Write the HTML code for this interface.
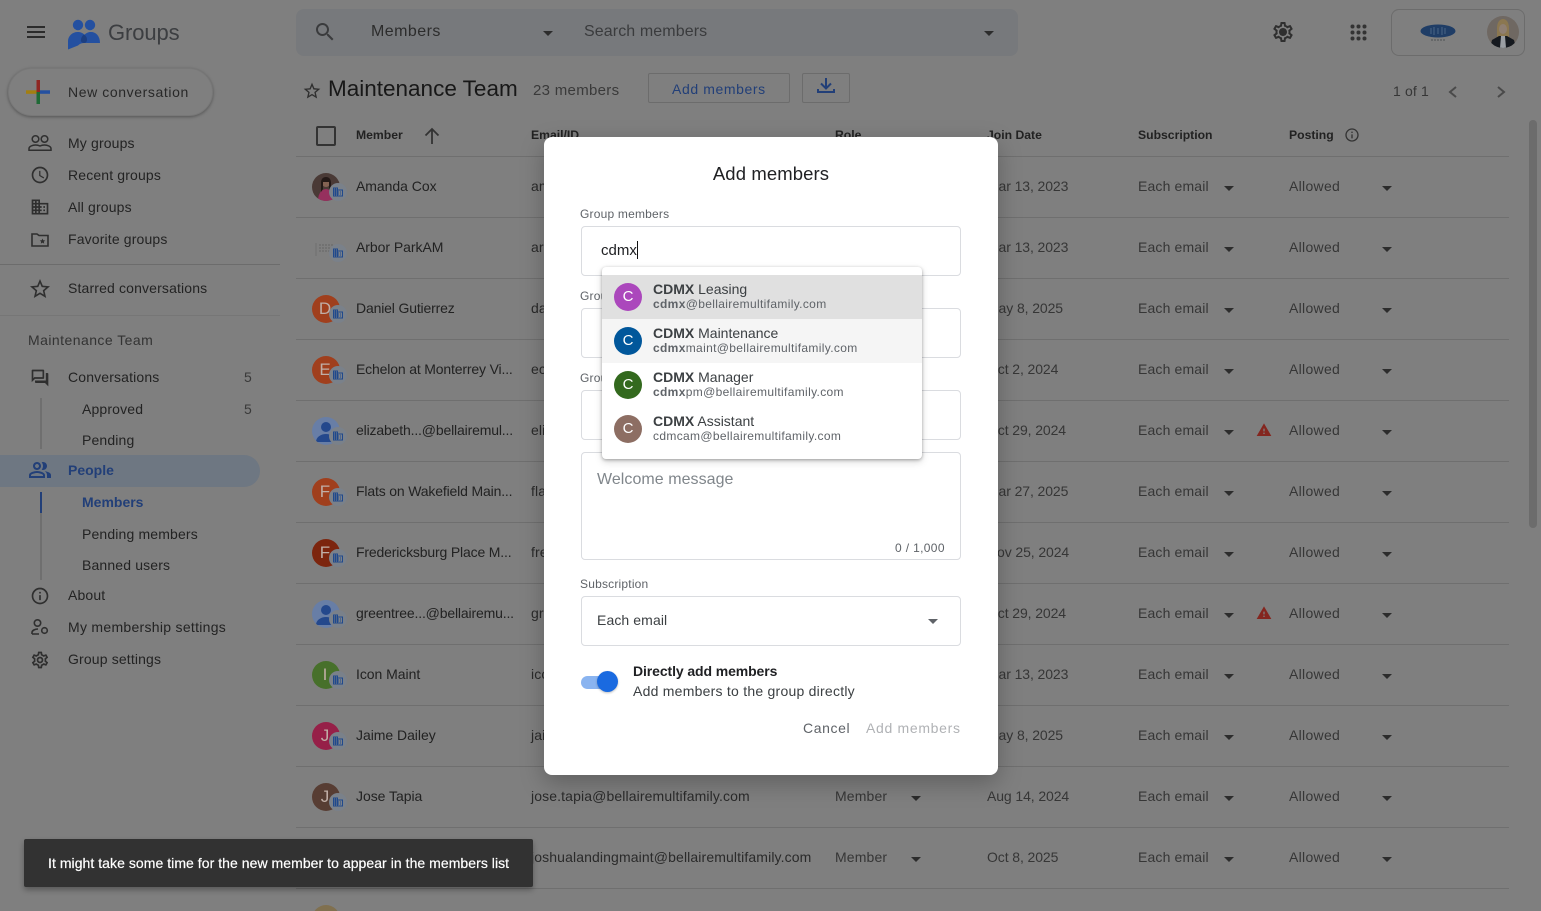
<!DOCTYPE html>
<html lang="en"><head><meta charset="utf-8"><title>Maintenance Team - Members</title>
<style>
*{box-sizing:border-box}
html,body{margin:0;padding:0;width:1541px;height:911px;overflow:hidden;background:#7f7f7f}
body{font-family:"Liberation Sans",Arial,sans-serif;font-size:14px;letter-spacing:.15px;color:#222;position:relative}
.t{position:absolute;white-space:nowrap;line-height:20px;height:20px}
.i{position:absolute;width:24px;height:24px;fill:#2f2f2f}
.s{width:20px;height:20px}
.b{position:absolute}
.r{position:absolute;left:0;width:1541px;height:61px}
.r:after{content:"";position:absolute;left:296px;width:1213px;top:60px;height:1px;background:#6f6f6f}
.r .t{top:19px;color:#2a2a2a}
.n{left:356px;color:#222!important;letter-spacing:-.04px}.l2{letter-spacing:-.16px}.e{left:531px;letter-spacing:.12px}.ro{left:835px;color:#363636!important}.d{left:987px;color:#363636!important;letter-spacing:-.1px}.su{left:1138px;color:#363636!important}.po{left:1289px;color:#363636!important;letter-spacing:.3px}
.c{position:absolute;width:0;height:0;border-left:5px solid transparent;border-right:5px solid transparent;border-top:5px solid #2c2c2c}
.r .c{top:29px}
.c1{left:911px}.c2{left:1224px}.c3{left:1382px}
.av{position:absolute;left:312px;top:16px;width:28px;height:28px;border-radius:50%;color:#c0aea6;font-size:17px;line-height:28px;text-align:center;padding-right:2px;overflow:hidden;letter-spacing:0}
.bd{position:absolute;left:329px;top:26px;width:18px;height:18px;border-radius:50%;background:#7a818a}
.bd svg{position:absolute;left:3px;top:3px;width:12px;height:12px;fill:#20498c}
.w{position:absolute;left:1256px;top:21px;width:16px;height:16px;fill:#84261f}
.h{font-weight:700;font-size:12.2px;color:#222;top:125px;letter-spacing:0}
.side{color:#232323}
.dlg{position:absolute;left:544px;top:137px;width:454px;height:638px;background:#fff;border-radius:8px;box-shadow:0 8px 24px rgba(0,0,0,.25)}
.f{position:absolute;left:37px;width:380px;border:1px solid #dadce0;border-radius:4px;background:#fff}
.l{position:absolute;left:36px;font-size:12px;color:#5f6368;line-height:16px;white-space:nowrap;letter-spacing:.2px}
.pop{position:absolute;left:58px;top:130px;width:320px;height:192px;background:#fff;border-radius:4px;box-shadow:0 1px 3px rgba(0,0,0,.3),0 3px 8px rgba(0,0,0,.15)}
.it{position:absolute;left:0;width:320px;height:44px}
.ca{position:absolute;left:12px;top:8px;width:28px;height:28px;border-radius:50%;color:#fff;text-align:center;line-height:28px;font-size:15px;letter-spacing:0}
.a1{position:absolute;left:51px;top:5px;font-size:14px;line-height:18px;color:#3c4043;white-space:nowrap;letter-spacing:0}
.a2{position:absolute;left:51px;top:21px;font-size:12px;line-height:16px;color:#5f6368;white-space:nowrap;letter-spacing:.34px}
.toast{position:absolute;left:24px;top:839px;width:509px;height:48px;background:#323232;border-radius:2px;color:#fff;line-height:48px;padding-left:24px;box-shadow:0 3px 6px rgba(0,0,0,.3);white-space:nowrap;font-size:14px;letter-spacing:.05px;-webkit-text-stroke:.2px #fff}
</style></head><body>
<svg width="0" height="0" style="position:absolute"><defs>
<symbol id="menu" viewBox="0 0 24 24"><path d="M3 18h18v-2H3v2zm0-5h18v-2H3v2zm0-7v2h18V6H3z"/></symbol>
<symbol id="search" viewBox="0 0 24 24"><path d="M15.5 14h-.79l-.28-.27C15.41 12.59 16 11.11 16 9.5 16 5.91 13.09 3 9.5 3S3 5.91 3 9.5 5.91 16 9.5 16c1.61 0 3.09-.59 4.23-1.57l.27.28v.79l5 4.99L20.49 19l-4.99-5zm-6 0C7.01 14 5 11.99 5 9.5S7.01 5 9.5 5 14 7.01 14 9.5 11.99 14 9.5 14z"/></symbol>
<symbol id="star" viewBox="0 0 24 24"><path d="M22 9.24l-7.19-.62L12 2 9.19 8.63 2 9.24l5.46 4.73L5.82 21 12 17.27 18.18 21l-1.63-7.03L22 9.24zM12 15.4l-3.76 2.27 1-4.28-3.32-2.88 4.38-.38L12 6.1l1.71 4.04 4.38.38-3.32 2.88 1 4.28L12 15.4z"/></symbol>
<symbol id="clock" viewBox="0 0 24 24"><path d="M11.99 2C6.47 2 2 6.48 2 12s4.47 10 9.99 10C17.52 22 22 17.52 22 12S17.52 2 11.99 2zM12 20c-4.42 0-8-3.58-8-8s3.58-8 8-8 8 3.58 8 8-3.58 8-8 8zm.5-13H11v6l5.25 3.15.75-1.23-4.5-2.67z"/></symbol>
<symbol id="domain" viewBox="0 0 24 24"><path d="M12 7V3H2v18h20V7H12zM6 19H4v-2h2v2zm0-4H4v-2h2v2zm0-4H4V9h2v2zm0-4H4V5h2v2zm4 12H8v-2h2v2zm0-4H8v-2h2v2zm0-4H8V9h2v2zm0-4H8V5h2v2zm10 12h-8v-2h2v-2h-2v-2h2v-2h-2V9h8v10zm-2-8h-2v2h2v-2zm0 4h-2v2h2v-2z"/></symbol>
<symbol id="forum" viewBox="0 0 24 24"><path d="M15 4v7H5.17L4 12.17V4h11m1-2H3c-.55 0-1 .45-1 1v14l4-4h10c.55 0 1-.45 1-1V3c0-.55-.45-1-1-1zm5 4h-2v9H6v2c0 .55.45 1 1 1h11l4 4V7c0-.55-.45-1-1-1z"/></symbol>
<symbol id="people" viewBox="0 0 24 24"><path d="M16.67 13.13C18.04 14.06 19 15.32 19 17v3h4v-3c0-2.18-3.57-3.47-6.33-3.87zM15 12c2.21 0 4-1.79 4-4s-1.79-4-4-4c-.47 0-.91.1-1.33.24C14.5 5.27 15 6.58 15 8s-.5 2.73-1.33 3.76c.42.14.86.24 1.33.24zM9 12c2.21 0 4-1.79 4-4s-1.79-4-4-4-4 1.79-4 4 1.79 4 4 4zm0-6c1.1 0 2 .9 2 2s-.9 2-2 2-2-.9-2-2 .9-2 2-2zM9 13c-2.67 0-8 1.34-8 4v3h16v-3c0-2.66-5.33-4-8-4zm6 5H3v-.99C3.2 16.29 6.3 15 9 15s5.8 1.29 6 2v1z"/></symbol>
<symbol id="info" viewBox="0 0 24 24"><path d="M11 7h2v2h-2zm0 4h2v6h-2zm1-9C6.48 2 2 6.48 2 12s4.48 10 10 10 10-4.48 10-10S17.52 2 12 2zm0 18c-4.41 0-8-3.59-8-8s3.59-8 8-8 8 3.59 8 8-3.59 8-8 8z"/></symbol>
<symbol id="gear" viewBox="0 0 24 24"><path d="M19.43 12.98c.04-.32.07-.64.07-.98 0-.34-.03-.66-.07-.98l2.11-1.65c.19-.15.24-.42.12-.64l-2-3.46c-.09-.16-.26-.25-.44-.25-.06 0-.12.01-.17.03l-2.49 1c-.52-.4-1.08-.73-1.69-.98l-.38-2.65C14.46 2.18 14.25 2 14 2h-4c-.25 0-.46.18-.49.42l-.38 2.65c-.61.25-1.17.59-1.69.98l-2.49-1c-.06-.02-.12-.03-.18-.03-.17 0-.34.09-.43.25l-2 3.46c-.13.22-.07.49.12.64l2.11 1.65c-.04.32-.07.65-.07.98 0 .33.03.66.07.98l-2.11 1.65c-.19.15-.24.42-.12.64l2 3.46c.09.16.26.25.44.25.06 0 .12-.01.17-.03l2.49-1c.52.4 1.08.73 1.69.98l.38 2.65c.03.24.24.42.49.42h4c.25 0 .46-.18.49-.42l.38-2.65c.61-.25 1.17-.59 1.69-.98l2.49 1c.06.02.12.03.18.03.17 0 .34-.09.43-.25l2-3.46c.12-.22.07-.49-.12-.64l-2.11-1.65zm-1.98-1.71c.04.31.05.52.05.73 0 .21-.02.43-.05.73l-.14 1.13.89.7 1.08.84-.7 1.21-1.27-.51-1.04-.42-.9.68c-.43.32-.84.56-1.25.73l-1.06.43-.16 1.13-.2 1.35h-1.4l-.19-1.35-.16-1.13-1.06-.43c-.43-.18-.83-.41-1.23-.71l-.91-.7-1.06.43-1.27.51-.7-1.21 1.08-.84.89-.7-.14-1.13c-.03-.31-.05-.54-.05-.74s.02-.43.05-.73l.14-1.13-.89-.7-1.08-.84.7-1.21 1.27.51 1.04.42.9-.68c.43-.32.84-.56 1.25-.73l1.06-.43.16-1.13.2-1.35h1.39l.19 1.35.16 1.13 1.06.43c.43.18.83.41 1.23.71l.91.7 1.06-.43 1.27-.51.7 1.21-1.07.85-.89.7.14 1.13zM12 8c-2.21 0-4 1.79-4 4s1.79 4 4 4 4-1.79 4-4-1.79-4-4-4zm0 6c-1.1 0-2-.9-2-2s.9-2 2-2 2 .9 2 2-.9 2-2 2z"/></symbol>
<symbol id="warn" viewBox="0 0 24 24"><path d="M1 21h22L12 2 1 21zm12-3h-2v-2h2v2zm0-4h-2v-4h2v4z"/></symbol>
<symbol id="bld" viewBox="0 0 24 24"><path d="M12 7V3H2v18h20V7H12zM6 19H4v-2h2v2zm0-4H4v-2h2v2zm0-4H4V9h2v2zm0-4H4V5h2v2zm4 12H8v-2h2v2zm0-4H8v-2h2v2zm0-4H8V9h2v2zm0-4H8V5h2v2zm10 12h-8v-2h2v-2h-2v-2h2v-2h-2V9h8v10zm-2-8h-2v2h2v-2zm0 4h-2v2h2v-2z"/></symbol>
</defs></svg>

<!-- top bar -->
<svg class="i" style="left:24px;top:20px;fill:#2b2b2b"><use href="#menu"/></svg>
<svg class="b" style="left:60px;top:12px" width="48" height="44" viewBox="60 12 48 44">
<circle cx="78" cy="25" r="5.200" fill="#2450a0"/><circle cx="90" cy="25" r="5.200" fill="#2450a0"/>
<path d="M68 49.500V41c0-5 4.500-9 9.500-9 3 0 5.500 1 7 2.800 1.500-1.800 4-2.800 6.500-2.800 5 0 9 4 9 11H84c-2 0-4 .5-6 2.500z" fill="#2450a0"/>
<path d="M84 34.500c2 1.200 3 3 3 5s-1 3.500-3 3.500-3.500-1.500-3-3.500c.2-2 1.300-3.800 3-5z" fill="#1d3f80"/></svg>
<div class="t" style="left:108px;top:20px;height:26px;line-height:26px;font-size:22px;color:#3c3e41;letter-spacing:-.1px">Groups</div>

<div class="b" style="left:296px;top:9px;width:722px;height:47px;background:#77797c;border-radius:8px"></div>
<svg class="i" style="left:313px;top:20px;fill:#3a3b3d"><use href="#search"/></svg>
<div class="t" style="left:371px;top:22px;font-size:16px;color:#2c2c2c;letter-spacing:.45px">Members</div>
<div class="c" style="left:543px;top:31px"></div>
<div class="t" style="left:584px;top:22px;font-size:16px;color:#3a3b3d;letter-spacing:.1px">Search members</div>
<div class="c" style="left:984px;top:31px"></div>
<svg class="i" style="left:1271px;top:20px;fill:#2f2f2f"><use href="#gear"/><circle cx="12" cy="12" r="2.500"/></svg>
<svg class="b" style="left:1350px;top:24px" width="18" height="18"><g fill="#333"><circle cx="2.500" cy="2.500" r="2"/><circle cx="8.500" cy="2.500" r="2"/><circle cx="14.500" cy="2.500" r="2"/><circle cx="2.500" cy="8.500" r="2"/><circle cx="8.500" cy="8.500" r="2"/><circle cx="14.500" cy="8.500" r="2"/><circle cx="2.500" cy="14.500" r="2"/><circle cx="8.500" cy="14.500" r="2"/><circle cx="14.500" cy="14.500" r="2"/></g></svg>
<div class="b" style="left:1391px;top:9px;width:134px;height:47px;border:1px solid #6c6c6c;border-radius:8px"></div>
<svg class="b" style="left:1420px;top:22px" width="36" height="20"><ellipse cx="18" cy="9" rx="17.500" ry="6.500" fill="#1f3d66"/><path d="M11 6v6M14 5v8M18 6v6M22 5v8M25 6v6" stroke="#56708f" stroke-width=".8" fill="none"/><path d="M11 18h14" stroke="#585a5c" stroke-width="1.200" stroke-dasharray="2 1"/></svg>
<svg class="b" style="left:1487px;top:16px" width="32" height="32" viewBox="0 0 32 32"><clipPath id="pc"><circle cx="16" cy="16" r="16"/></clipPath><g clip-path="url(#pc)"><rect width="32" height="32" fill="#6f6862"/><path d="M10 26V12c0-6 3-9 6-9s6 3 6 9v14z" fill="#8b7750"/><ellipse cx="16" cy="13" rx="4" ry="5" fill="#8f7f72"/><path d="M3 32l2-8 7-4h8l7 4 2 8z" fill="#15191f"/><path d="M13 32l1-12h4l1 12z" fill="#9a9ea3"/></g></svg>

<!-- sidebar -->
<div class="b" style="left:8px;top:68px;width:205px;height:48px;border-radius:24px;background:#7f7f7f;border:1px solid #787878;box-shadow:0 1px 3px rgba(0,0,0,.35)"></div>
<svg class="b" style="left:26px;top:80px" width="24" height="24"><rect x="10.500" y="0" width="3.500" height="12" fill="#8f2723"/><rect x="14" y="10.300" width="11" height="3.500" fill="#2450a0"/><rect x="10.500" y="12" width="3.500" height="12" fill="#1f6a36"/><rect x="0" y="10.300" width="10.500" height="3.500" fill="#a37f10"/></svg>
<div class="t" style="left:68px;top:82px;color:#282828;letter-spacing:.6px">New conversation</div>

<svg class="b" style="left:28px;top:134px" width="24" height="18" fill="none" stroke="#2f2f2f" stroke-width="1.500"><circle cx="7.500" cy="5" r="3.300"/><circle cx="16.500" cy="5" r="3.300"/><path d="M1 16.200v-1.700c0-2 3.500-3.500 6.500-3.500 1.800 0 3.300.4 4.500 1 1.200-.6 2.800-1 4.500-1 3 0 6.500 1.500 6.500 3.500v1.700z"/></svg><div class="t side" style="left:68px;top:133px">My groups</div>
<svg class="i s" style="left:30px;top:165px"><use href="#clock"/></svg><div class="t side" style="left:68px;top:165px">Recent groups</div>
<svg class="i s" style="left:30px;top:197px"><use href="#domain"/></svg><div class="t side" style="left:68px;top:197px">All groups</div>
<svg class="b" style="left:31px;top:232px" width="18" height="15"><path d="M1 2h5l2 1.500h9v10.500H1z" fill="none" stroke="#2f2f2f" stroke-width="1.600"/><path d="M11.500 6.500l.8 1.800 1.900.2-1.400 1.200.4 1.900-1.700-1-1.700 1 .4-1.900-1.400-1.200 1.900-.2z" fill="#2f2f2f"/></svg><div class="t side" style="left:68px;top:229px">Favorite groups</div>
<div class="b" style="left:0;top:264px;width:280px;height:1px;background:#6c6c6c"></div>
<svg class="i" style="left:28px;top:277px"><use href="#star"/></svg><div class="t side" style="left:68px;top:278px">Starred conversations</div>
<div class="b" style="left:0;top:315px;width:280px;height:1px;background:#767676"></div>
<div class="t" style="left:28px;top:330px;color:#333;letter-spacing:.45px">Maintenance Team</div>
<svg class="i s" style="left:30px;top:368px"><use href="#forum"/></svg><div class="t side" style="left:68px;top:367px">Conversations</div><div class="t" style="left:244px;top:367px;color:#3a3a3a">5</div>
<div class="b" style="left:40px;top:398px;width:2px;height:51px;background:#6f6f6f"></div>
<div class="t side" style="left:82px;top:399px">Approved</div><div class="t" style="left:244px;top:399px;color:#3a3a3a">5</div>
<div class="t side" style="left:82px;top:430px">Pending</div>
<div class="b" style="left:0;top:455px;width:260px;height:32px;background:#6e7782;border-radius:0 16px 16px 0"></div>
<svg class="i" style="left:28px;top:458px;fill:#223f78"><use href="#people"/></svg><div class="t" style="left:68px;top:460px;color:#223f78;font-weight:700;letter-spacing:0">People</div>
<div class="b" style="left:40px;top:492px;width:2px;height:88px;background:#6f6f6f"></div>
<div class="b" style="left:40px;top:492px;width:2px;height:21px;background:#223f78"></div>
<div class="t" style="left:82px;top:492px;color:#223f78;font-weight:700;letter-spacing:0">Members</div>
<div class="t side" style="left:82px;top:524px">Pending members</div>
<div class="t side" style="left:82px;top:555px">Banned users</div>
<svg class="i s" style="left:30px;top:586px"><use href="#info"/></svg><div class="t side" style="left:68px;top:585px">About</div>
<svg class="b" style="left:30px;top:618px" width="20" height="18" fill="none" stroke="#2f2f2f" stroke-width="1.600"><circle cx="7.500" cy="5" r="3.200"/><path d="M2 16v-1.500c0-2 3-3.500 6-3.500M2 16h7"/><circle cx="14.500" cy="12.500" r="2.800"/></svg><div class="t side" style="left:68px;top:617px;letter-spacing:.29px">My membership settings</div>
<svg class="i s" style="left:30px;top:650px"><use href="#gear"/></svg><div class="t side" style="left:68px;top:649px">Group settings</div>

<!-- title row -->
<svg class="i s" style="left:302px;top:81px"><use href="#star"/></svg>
<div class="t" style="left:328px;top:74px;height:30px;line-height:30px;font-size:22.500px;color:#181818;letter-spacing:0">Maintenance Team</div>
<div class="t" style="left:533px;top:81px;font-size:15px;color:#3a3a3a;letter-spacing:.3px">23 members</div>
<div class="b" style="left:648px;top:73px;width:142px;height:30px;border:1px solid #6c6c6c;border-radius:2px"></div>
<div class="t" style="left:672px;top:79px;color:#223f78;letter-spacing:.6px">Add members</div>
<div class="b" style="left:802px;top:73px;width:48px;height:30px;border:1px solid #6c6c6c;border-radius:2px"></div>
<svg class="b" style="left:816px;top:76px" width="20" height="20" viewBox="816 76 20 20" fill="none" stroke="#223f78" stroke-width="2"><path d="M826 78v10M821 83.500l5 5 5-5"/><path d="M818 89v3h16v-3"/></svg>
<div class="t" style="left:1393px;top:81px;color:#363636;font-size:14px">1 of 1</div>
<svg class="b" style="left:1447px;top:85px" width="12" height="14" fill="none" stroke="#4a4a4a" stroke-width="2"><path d="M9 2L3 7l6 5"/></svg>
<svg class="b" style="left:1495px;top:85px" width="12" height="14" fill="none" stroke="#4a4a4a" stroke-width="2"><path d="M3 2l6 5-6 5"/></svg>
<div class="b" style="left:1529px;top:120px;width:8px;height:408px;background:#6c6c6c;border-radius:4px"></div>

<!-- table header -->
<div class="b" style="left:316px;top:126px;width:20px;height:20px;border:2px solid #333;border-radius:2px"></div>
<div class="t h" style="left:356px">Member</div>
<svg class="b" style="left:422px;top:126px" width="20" height="20" viewBox="0 0 20 20" fill="none" stroke="#333" stroke-width="1.800"><path d="M10 18V3M3.500 9.500L10 3l6.500 6.500"/></svg>
<div class="t h" style="left:531px">Email/ID</div><div class="t h" style="left:835px">Role</div><div class="t h" style="left:987px">Join Date</div><div class="t h" style="left:1138px">Subscription</div><div class="t h" style="left:1289px">Posting</div>
<svg class="i" style="left:1344px;top:127px;width:16px;height:16px;fill:#333"><use href="#info"/></svg>
<div class="b" style="left:296px;top:156px;width:1213px;height:1px;background:#6f6f6f"></div>

<!-- rows -->
<div class="r" style="top:157px"><svg class="av" viewBox="0 0 28 28" style="padding:0"><rect width="28" height="28" fill="#4a3a36"/><path d="M6 28c0-8 4-12 8-12s8 4 8 12z" fill="#96305e"/><circle cx="14" cy="10" r="4" fill="#846253"/><path d="M9 19V10c0-4 2-6 5-6s5 2 5 6v9l-2-3V9h-6v7z" fill="#241917"/></svg><div class="bd"><svg><use href="#bld"/></svg></div><div class="t n">Amanda Cox</div><div class="t e">amanda.cox@bellairemultifamily.com</div><div class="t ro">Member</div><div class="c c1"></div><div class="t d">Mar 13, 2023</div><div class="t su">Each email</div><div class="c c2"></div><div class="t po">Allowed</div><div class="c c3"></div></div>
<div class="r" style="top:218px"><svg class="av" viewBox="0 0 28 28" style="padding:0"><path d="M4 9v13" stroke="#6f6f6f"/><path d="M7 11h14M7 14h12M7 17h14" stroke="#6b6b6b" stroke-width="1.200" stroke-dasharray="2 1"/></svg><div class="bd"><svg><use href="#bld"/></svg></div><div class="t n">Arbor ParkAM</div><div class="t e">arborparkam@bellairemultifamily.com</div><div class="t ro">Member</div><div class="c c1"></div><div class="t d">Mar 13, 2023</div><div class="t su">Each email</div><div class="c c2"></div><div class="t po">Allowed</div><div class="c c3"></div></div>
<div class="r" style="top:279px"><div class="av" style="background:#a03f1d">D</div><div class="bd"><svg><use href="#bld"/></svg></div><div class="t n l2">Daniel Gutierrez</div><div class="t e">daniel@bellairemultifamily.com</div><div class="t ro">Member</div><div class="c c1"></div><div class="t d">May 8, 2025</div><div class="t su">Each email</div><div class="c c2"></div><div class="t po">Allowed</div><div class="c c3"></div></div>
<div class="r" style="top:340px"><div class="av" style="background:#a03f1d">E</div><div class="bd"><svg><use href="#bld"/></svg></div><div class="t n l2">Echelon at Monterrey Vi...</div><div class="t e">echelon@bellairemultifamily.com</div><div class="t ro">Member</div><div class="c c1"></div><div class="t d">Oct 2, 2024</div><div class="t su">Each email</div><div class="c c2"></div><div class="t po">Allowed</div><div class="c c3"></div></div>
<div class="r" style="top:401px"><svg class="av" viewBox="0 0 28 28" style="padding:0"><rect width="28" height="28" fill="#687ea6"/><circle cx="14" cy="10" r="5" fill="#24488c"/><path d="M4 25c0-5 5-8 10-8s10 3 10 8z" fill="#24488c"/></svg><div class="bd"><svg><use href="#bld"/></svg></div><div class="t n l2">elizabeth...@bellairemul...</div><div class="t e">elizabeth@bellairemultifamily.com</div><div class="t ro">Member</div><div class="c c1"></div><div class="t d">Oct 29, 2024</div><div class="t su">Each email</div><div class="c c2"></div><svg class="w"><use href="#warn"/></svg><div class="t po">Allowed</div><div class="c c3"></div></div>
<div class="r" style="top:462px"><div class="av" style="background:#a03f1d">F</div><div class="bd"><svg><use href="#bld"/></svg></div><div class="t n l2">Flats on Wakefield Main...</div><div class="t e">flats@bellairemultifamily.com</div><div class="t ro">Member</div><div class="c c1"></div><div class="t d">Mar 27, 2025</div><div class="t su">Each email</div><div class="c c2"></div><div class="t po">Allowed</div><div class="c c3"></div></div>
<div class="r" style="top:523px"><div class="av" style="background:#7c250e">F</div><div class="bd"><svg><use href="#bld"/></svg></div><div class="t n l2">Fredericksburg Place M...</div><div class="t e">fred@bellairemultifamily.com</div><div class="t ro">Member</div><div class="c c1"></div><div class="t d">Nov 25, 2024</div><div class="t su">Each email</div><div class="c c2"></div><div class="t po">Allowed</div><div class="c c3"></div></div>
<div class="r" style="top:584px"><svg class="av" viewBox="0 0 28 28" style="padding:0"><rect width="28" height="28" fill="#687ea6"/><circle cx="14" cy="10" r="5" fill="#24488c"/><path d="M4 25c0-5 5-8 10-8s10 3 10 8z" fill="#24488c"/></svg><div class="bd"><svg><use href="#bld"/></svg></div><div class="t n l2">greentree...@bellairemu...</div><div class="t e">greentree@bellairemultifamily.com</div><div class="t ro">Member</div><div class="c c1"></div><div class="t d">Oct 29, 2024</div><div class="t su">Each email</div><div class="c c2"></div><svg class="w"><use href="#warn"/></svg><div class="t po">Allowed</div><div class="c c3"></div></div>
<div class="r" style="top:645px"><div class="av" style="background:#47702b">I</div><div class="bd"><svg><use href="#bld"/></svg></div><div class="t n">Icon Maint</div><div class="t e">icon@bellairemultifamily.com</div><div class="t ro">Member</div><div class="c c1"></div><div class="t d">Mar 13, 2023</div><div class="t su">Each email</div><div class="c c2"></div><div class="t po">Allowed</div><div class="c c3"></div></div>
<div class="r" style="top:706px"><div class="av" style="background:#962048">J</div><div class="bd"><svg><use href="#bld"/></svg></div><div class="t n">Jaime Dailey</div><div class="t e">jaime@bellairemultifamily.com</div><div class="t ro">Member</div><div class="c c1"></div><div class="t d">May 8, 2025</div><div class="t su">Each email</div><div class="c c2"></div><div class="t po">Allowed</div><div class="c c3"></div></div>
<div class="r" style="top:767px"><div class="av" style="background:#573d33">J</div><div class="bd"><svg><use href="#bld"/></svg></div><div class="t n">Jose Tapia</div><div class="t e">jose.tapia@bellairemultifamily.com</div><div class="t ro">Member</div><div class="c c1"></div><div class="t d">Aug 14, 2024</div><div class="t su">Each email</div><div class="c c2"></div><div class="t po">Allowed</div><div class="c c3"></div></div>
<div class="r" style="top:828px"><div class="av" style="background:#573d33">J</div><div class="bd"><svg><use href="#bld"/></svg></div><div class="t n">Joshua Landing</div><div class="t e">joshualandingmaint@bellairemultifamily.com</div><div class="t ro">Member</div><div class="c c1"></div><div class="t d">Oct 8, 2025</div><div class="t su">Each email</div><div class="c c2"></div><div class="t po">Allowed</div><div class="c c3"></div></div>
<div class="b" style="left:312px;top:905px;width:28px;height:28px;border-radius:50%;background:#80704f"></div>

<!-- toast -->
<div class="toast">It might take some time for the new member to appear in the members list</div>

<!-- dialog -->
<div class="dlg">
<div class="t" style="left:0;width:454px;top:27px;text-align:center;font-size:18.500px;color:#202124;height:22px;line-height:20px;letter-spacing:.1px">Add members</div>
<div class="l" style="top:69px">Group members</div>
<div class="f" style="top:89px;height:50px"></div>
<div class="t" style="left:57px;top:103px;font-size:15px;color:#202124;letter-spacing:0;margin-top:1px">cdmx</div>
<div class="b" style="left:93px;top:104px;width:1px;height:18px;background:#111"></div>
<div class="l" style="top:151px">Group owners</div>
<div class="f" style="top:171px;height:50px"></div>
<div class="l" style="top:233px">Group managers</div>
<div class="f" style="top:253px;height:50px"></div>
<div class="f" style="top:315px;height:108px"></div>
<div class="t" style="left:53px;top:333px;font-size:16px;color:#80868b;letter-spacing:.05px">Welcome message</div>
<div class="t" style="left:351px;top:401px;font-size:12px;color:#5f6368;letter-spacing:.35px">0 / 1,000</div>
<div class="l" style="top:439px">Subscription</div>
<div class="f" style="top:459px;height:50px"></div>
<div class="t" style="left:53px;top:473px;color:#3c4043;letter-spacing:.1px">Each email</div>
<div class="c" style="left:384px;top:482px;border-top-color:#5f6368"></div>
<div class="b" style="left:37px;top:539px;width:34px;height:13px;border-radius:7px;background:#8ab4f0"></div>
<div class="b" style="left:53px;top:534px;width:21px;height:21px;border-radius:50%;background:#1a6ae0;box-shadow:0 1px 2px rgba(0,0,0,.25)"></div>
<div class="t" style="left:89px;top:524px;color:#202124;font-weight:700;letter-spacing:-.1px">Directly add members</div>
<div class="t" style="left:89px;top:544px;color:#3c4043;letter-spacing:.24px">Add members to the group directly</div>
<div class="t" style="left:259px;top:581px;color:#5f6368;letter-spacing:.6px">Cancel</div>
<div class="t" style="left:322px;top:581px;color:#b0b2b5;letter-spacing:.68px">Add members</div>

<div class="pop">
<div class="it" style="top:8px;background:#e0e0e0"><div class="ca" style="background:#ab47bc">C</div><div class="a1"><b>CDMX</b> Leasing</div><div class="a2"><b>cdmx</b>@bellairemultifamily.com</div></div>
<div class="it" style="top:52px;background:#f5f5f5"><div class="ca" style="background:#01579b">C</div><div class="a1"><b>CDMX</b> Maintenance</div><div class="a2"><b>cdmx</b>maint@bellairemultifamily.com</div></div>
<div class="it" style="top:96px"><div class="ca" style="background:#33691e">C</div><div class="a1"><b>CDMX</b> Manager</div><div class="a2"><b>cdmx</b>pm@bellairemultifamily.com</div></div>
<div class="it" style="top:140px"><div class="ca" style="background:#8d6e63">C</div><div class="a1"><b>CDMX</b> Assistant</div><div class="a2">cdmcam@bellairemultifamily.com</div></div>
</div>
</div>
</body></html>
